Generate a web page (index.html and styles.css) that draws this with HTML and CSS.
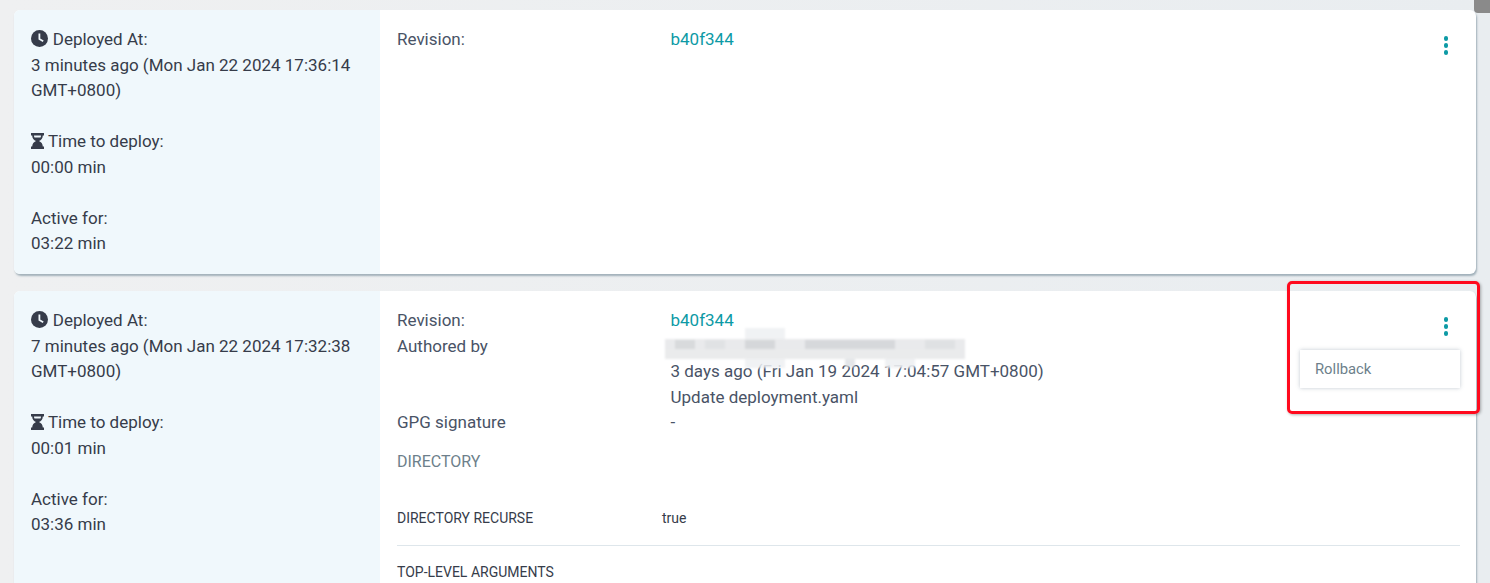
FILE: index.html
```html
<!DOCTYPE html>
<html lang="en">
<head>
  <meta charset="UTF-8" />
  <meta name="viewport" content="width=device-width, initial-scale=1" />
  <title>Deployment history</title>
  <link rel="stylesheet" href="styles.css">
</head>
<body>
  <div class="scroll-thumb"></div>
  <div class="history">

    <div class="card card-short">
      <div class="summary">
        <div class="summary-block">
          <div><svg class="icon" viewBox="0 0 16 16"><circle cx="8" cy="8" r="8" fill="#363c4a"/><path d="M7.900 3.400v5l3.600 2.200" fill="none" stroke="#f0f8fc" stroke-width="1.700"/></svg> <span class="label-clock">Deployed At:</span></div>
          <div>3 minutes ago (Mon Jan 22 2024 17:36:14 GMT+0800)</div>
        </div>
        <div class="summary-block">
          <div><svg class="icon icon-glass" viewBox="0 0 13 16"><path d="M0 0h13v2.400h-1.200c0 3-1.600 4.400-3.800 5.600 2.200 1.200 3.800 2.600 3.800 5.600H13V16H0v-2.400h1.200c0-3 1.600-4.400 3.800-5.600C2.800 6.800 1.200 5.400 1.200 2.400H0z" fill="#363c4a"/><path d="M3 2.400h7c0 .9-.2 1.600-.5 2.200h-6c-.3-.6-.5-1.300-.5-2.200z" fill="#f0f8fc"/></svg> Time to deploy:</div>
          <div>00:00 min</div>
        </div>
        <div class="summary-block">
          <div>Active for:</div>
          <div>03:22 min</div>
        </div>
      </div>
      <div class="details">
        <div class="row">
          <div class="row-label">Revision:</div>
          <div><a class="rev-link" href="#">b40f344</a></div>
        </div>
      </div>
      <button class="kebab"><i></i><i></i><i></i></button>
    </div>

    <div class="card">
      <div class="summary">
        <div class="summary-block">
          <div><svg class="icon" viewBox="0 0 16 16"><circle cx="8" cy="8" r="8" fill="#363c4a"/><path d="M7.900 3.400v5l3.600 2.200" fill="none" stroke="#f0f8fc" stroke-width="1.700"/></svg> <span class="label-clock">Deployed At:</span></div>
          <div>7 minutes ago (Mon Jan 22 2024 17:32:38 GMT+0800)</div>
        </div>
        <div class="summary-block">
          <div><svg class="icon icon-glass" viewBox="0 0 13 16"><path d="M0 0h13v2.400h-1.200c0 3-1.600 4.400-3.800 5.600 2.200 1.200 3.800 2.600 3.800 5.600H13V16H0v-2.400h1.200c0-3 1.600-4.400 3.800-5.600C2.800 6.800 1.200 5.400 1.200 2.400H0z" fill="#363c4a"/><path d="M3 2.400h7c0 .9-.2 1.600-.5 2.200h-6c-.3-.6-.5-1.300-.5-2.200z" fill="#f0f8fc"/></svg> Time to deploy:</div>
          <div>00:01 min</div>
        </div>
        <div class="summary-block">
          <div>Active for:</div>
          <div>03:36 min</div>
        </div>
      </div>
      <div class="details">
        <div class="row">
          <div class="row-label">Revision:</div>
          <div><a class="rev-link" href="#">b40f344</a></div>
        </div>
        <div class="row">
          <div class="row-label">Authored by</div>
          <div class="author-cell">
            <div class="author"></div>
            <div>3 days ago (Fri Jan 19 2024 17:04:57 GMT+0800)</div>
            <div>Update deployment.yaml</div>
            <div class="smudge"></div>
          </div>
        </div>
        <div class="row">
          <div class="row-label">GPG signature</div>
          <div>-</div>
        </div>
        <div class="section-title">DIRECTORY</div>
        <div class="param">
          <div>DIRECTORY RECURSE</div>
          <div>true</div>
        </div>
        <div class="section-sub">TOP-LEVEL ARGUMENTS</div>
      </div>
      <button class="kebab"><i></i><i></i><i></i></button>
      <div class="menu"><div class="menu-item">Rollback</div></div>
    </div>

  </div>
  <div class="callout"></div>
</body>
</html>
```

FILE: styles.css
```css
html, body {
  height: 583px;
  overflow: hidden;
}

body {
  margin: 0;
  background: linear-gradient(90deg, #eff0f1 0, #e9edf0 100%);
  font-family: 'Roboto', sans-serif;
  font-size: 17px;
  line-height: 25.5px;
  color: #363c4a;
}

.history {
  padding: 10px 14px 0 14px;
}

.card {
  position: relative;
  display: flex;
  background: #fff;
  border-radius: 6px;
  box-shadow: 1px 2px 2px 0 rgba(100, 125, 140, 0.55);
  margin-bottom: 17px;
  min-height: 300px;
}

.card-short {
  min-height: 264px;
  height: 264px;
}

.summary {
  width: 349px;
  flex: none;
  padding: 17px 0 0 17px;
  background: #f0f8fc;
  border-radius: 6px 0 0 6px;
}

.summary-block {
  width: 330px;
  margin-bottom: 25.5px;
}

.icon {
  width: 17px;
  height: 17px;
  vertical-align: -2px;
}

.icon-glass {
  width: 13px;
  height: 16px;
}

.label-clock {
  margin-left: 0.5px;
}

.details {
  flex: 1;
  padding: 17px 16px 0 17px;
  color: #495366;
}

.row {
  display: grid;
  grid-template-columns: 273.5px 1fr;
}

.rev-link {
  color: #0d9aa5;
  text-decoration: none;
}

.author-cell {
  position: relative;
}

.author {
  height: 25.5px;
}

/* mosaic over the author name, it also eats into the line below */
.smudge {
  position: absolute;
  left: -6px;
  top: -6px;
  width: 300px;
  height: 42px;
  filter: blur(1px);
  background:
    linear-gradient(#d8dadc, #d8dadc) 10px 12px / 20px 9px no-repeat,
    linear-gradient(#e0e2e4, #e0e2e4) 40px 12px / 20px 9px no-repeat,
    linear-gradient(#d5d7da, #d5d7da) 80px 12px / 30px 9px no-repeat,
    linear-gradient(#d6d8db, #d6d8db) 140px 12px / 90px 9px no-repeat,
    linear-gradient(#dfe1e3, #dfe1e3) 260px 12px / 30px 9px no-repeat,
    linear-gradient(#eaebec, #eaebec) 0 21px / 295px 10px no-repeat,
    linear-gradient(#e9eaec, #e9eaec) 0 11px / 300px 20px no-repeat,
    linear-gradient(rgba(238, 240, 242, 0.85), rgba(238, 240, 242, 0.85)) 80px 0 / 40px 40px no-repeat,
    linear-gradient(rgba(225, 228, 231, 0.9), rgba(225, 228, 231, 0.9)) 180px 30px / 10px 9px no-repeat,
    linear-gradient(rgba(238, 240, 242, 0.9), rgba(238, 240, 242, 0.9)) 220px 30px / 30px 10px no-repeat;
}

.section-title {
  margin-top: 13px;
  font-size: 16px;
  color: #6d7f8b;
}

.param {
  display: grid;
  grid-template-columns: 265px 1fr;
  margin-top: 32px;
  padding-bottom: 13px;
  border-bottom: 1px solid #dee6eb;
  font-size: 14px;
  color: #363c4a;
}

.section-sub {
  margin-top: 14px;
  font-size: 14px;
  color: #363c4a;
}

.kebab {
  position: absolute;
  top: 26px;
  right: 28px;
  display: flex;
  flex-direction: column;
  gap: 2.500px;
  padding: 0;
  border: 0;
  background: none;
}

.kebab i {
  display: block;
  width: 4.500px;
  height: 4.500px;
  border-radius: 50%;
  background: #0d9aa5;
}

.menu {
  position: absolute;
  top: 59px;
  right: 16px;
  width: 160px;
  height: 38px;
  background: #fff;
  box-shadow: 0 0 4px rgba(80, 100, 120, 0.35);
}

.menu-item {
  padding: 7px 15px;
  font-size: 14.800px;
  color: #6d7f8b;
}

.callout {
  position: absolute;
  left: 1287px;
  top: 281px;
  width: 187px;
  height: 127px;
  border: 3px solid #ff0a1e;
  border-radius: 5px;
  box-shadow: 1px 1px 3px rgba(0, 0, 0, 0.3);
}

.scroll-thumb {
  position: absolute;
  top: 0;
  right: 0;
  width: 16px;
  height: 13px;
  background: #8a8a8a;
  border-bottom-left-radius: 4px;
}
```
